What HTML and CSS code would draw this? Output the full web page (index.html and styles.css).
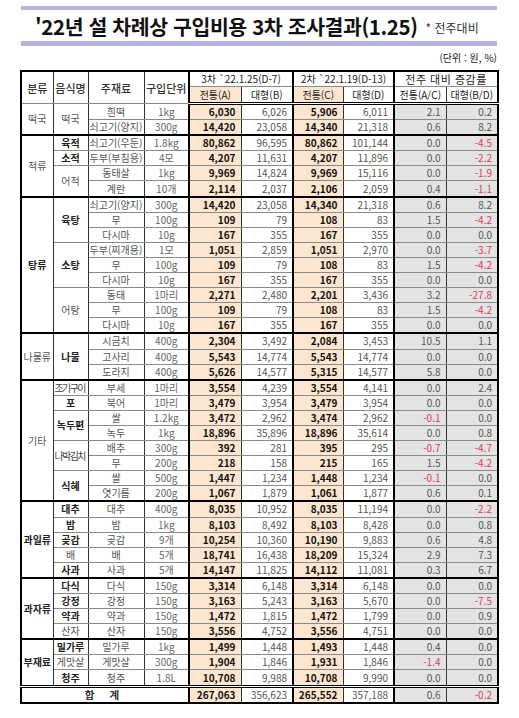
FILE: index.html
```html
<!DOCTYPE html>
<html lang="ko">
<head>
<meta charset="utf-8">
<title>'22년 설 차례상 구입비용 3차 조사결과</title>
<link rel="stylesheet" href="styles.css">
</head>
<body>
<div class="title">
  <span class="main">'22년 설 차례상 구입비용 3차 조사결과(1.25)</span>
  <span class="sub">* 전주대비</span>
</div>
<div class="unit">(단위 : 원, %)</div>
<table class="tbl">
  <colgroup>
    <col class="c1"><col class="c2"><col class="c3"><col class="c4">
    <col class="c5"><col class="c6"><col class="c7"><col class="c8"><col class="c9"><col class="c10">
  </colgroup>
  <thead>
    <tr class="h1">
      <th rowspan="2">분류</th>
      <th rowspan="2">음식명</th>
      <th rowspan="2">주재료</th>
      <th rowspan="2">구입단위</th>
      <th colspan="2" class="tl">3차 `22.1.25(D-7)</th>
      <th colspan="2" class="tl">2차 `22.1.19(D-13)</th>
      <th colspan="2" class="tl">전주 대비 증감률</th>
    </tr>
    <tr class="h2">
      <th class="p tl">전통(A)</th>
      <th>대형(B)</th>
      <th class="p tl">전통(C)</th>
      <th>대형(D)</th>
      <th class="tl">전통(A/C)</th>
      <th>대형(B/D)</th>
    </tr>
  </thead>
  <tbody>
    <tr class="first">
      <td rowspan="2" class="cat">떡국</td><td rowspan="2" class="dish">떡국</td>
      <td class="ing">흰떡</td><td class="u">1kg</td>
      <td class="p n tl">6,030</td><td class="m">6,026</td><td class="p n tl">5,906</td><td class="m">6,011</td><td class="g tl">2.1</td><td class="g">0.2</td>
    </tr>
    <tr>
      <td class="ing clip">쇠고기(양지)</td><td class="u">300g</td>
      <td class="p n tl">14,420</td><td class="m">23,058</td><td class="p n tl">14,340</td><td class="m">21,318</td><td class="g tl">0.6</td><td class="g">8.2</td>
    </tr>

    <tr class="grp">
      <td rowspan="4" class="cat">적류</td><td class="dish dk">육적</td>
      <td class="ing clip">쇠고기(우둔)</td><td class="u">1.8kg</td>
      <td class="p n tl">80,862</td><td class="m">96,595</td><td class="p n tl">80,862</td><td class="m">101,144</td><td class="g tl">0.0</td><td class="g neg">-4.5</td>
    </tr>
    <tr>
      <td class="dish dk">소적</td>
      <td class="ing clip">두부(부침용)</td><td class="u">4모</td>
      <td class="p n tl">4,207</td><td class="m">11,631</td><td class="p n tl">4,207</td><td class="m">11,896</td><td class="g tl">0.0</td><td class="g neg">-2.2</td>
    </tr>
    <tr>
      <td rowspan="2" class="dish">어적</td>
      <td class="ing">동태살</td><td class="u">1kg</td>
      <td class="p n tl">9,969</td><td class="m">14,824</td><td class="p n tl">9,969</td><td class="m">15,116</td><td class="g tl">0.0</td><td class="g neg">-1.9</td>
    </tr>
    <tr>
      <td class="ing">계란</td><td class="u">10개</td>
      <td class="p n tl">2,114</td><td class="m">2,037</td><td class="p n tl">2,106</td><td class="m">2,059</td><td class="g tl">0.4</td><td class="g neg">-1.1</td>
    </tr>

    <tr class="grp">
      <td rowspan="9" class="cat dk">탕류</td><td rowspan="3" class="dish dk">육탕</td>
      <td class="ing clip">쇠고기(양지)</td><td class="u">300g</td>
      <td class="p n tl">14,420</td><td class="m">23,058</td><td class="p n tl">14,340</td><td class="m">21,318</td><td class="g tl">0.6</td><td class="g">8.2</td>
    </tr>
    <tr>
      <td class="ing">무</td><td class="u">100g</td>
      <td class="p n tl">109</td><td class="m">79</td><td class="p n tl">108</td><td class="m">83</td><td class="g tl">1.5</td><td class="g neg">-4.2</td>
    </tr>
    <tr>
      <td class="ing">다시마</td><td class="u">10g</td>
      <td class="p n tl">167</td><td class="m">355</td><td class="p n tl">167</td><td class="m">355</td><td class="g tl">0.0</td><td class="g">0.0</td>
    </tr>
    <tr>
      <td rowspan="3" class="dish dk">소탕</td>
      <td class="ing clip">두부(찌개용)</td><td class="u">1모</td>
      <td class="p n tl">1,051</td><td class="m">2,859</td><td class="p n tl">1,051</td><td class="m">2,970</td><td class="g tl">0.0</td><td class="g neg">-3.7</td>
    </tr>
    <tr>
      <td class="ing">무</td><td class="u">100g</td>
      <td class="p n tl">109</td><td class="m">79</td><td class="p n tl">108</td><td class="m">83</td><td class="g tl">1.5</td><td class="g neg">-4.2</td>
    </tr>
    <tr>
      <td class="ing">다시마</td><td class="u">10g</td>
      <td class="p n tl">167</td><td class="m">355</td><td class="p n tl">167</td><td class="m">355</td><td class="g tl">0.0</td><td class="g">0.0</td>
    </tr>
    <tr>
      <td rowspan="3" class="dish">어탕</td>
      <td class="ing">동태</td><td class="u">1마리</td>
      <td class="p n tl">2,271</td><td class="m">2,480</td><td class="p n tl">2,201</td><td class="m">3,436</td><td class="g tl">3.2</td><td class="g neg">-27.8</td>
    </tr>
    <tr>
      <td class="ing">무</td><td class="u">100g</td>
      <td class="p n tl">109</td><td class="m">79</td><td class="p n tl">108</td><td class="m">83</td><td class="g tl">1.5</td><td class="g neg">-4.2</td>
    </tr>
    <tr>
      <td class="ing">다시마</td><td class="u">10g</td>
      <td class="p n tl">167</td><td class="m">355</td><td class="p n tl">167</td><td class="m">355</td><td class="g tl">0.0</td><td class="g">0.0</td>
    </tr>

    <tr class="grp">
      <td rowspan="3" class="cat">나물류</td><td rowspan="3" class="dish dk">나물</td>
      <td class="ing">시금치</td><td class="u">400g</td>
      <td class="p n tl">2,304</td><td class="m">3,492</td><td class="p n tl">2,084</td><td class="m">3,453</td><td class="g tl">10.5</td><td class="g">1.1</td>
    </tr>
    <tr>
      <td class="ing">고사리</td><td class="u">400g</td>
      <td class="p n tl">5,543</td><td class="m">14,774</td><td class="p n tl">5,543</td><td class="m">14,774</td><td class="g tl">0.0</td><td class="g">0.0</td>
    </tr>
    <tr>
      <td class="ing">도라지</td><td class="u">400g</td>
      <td class="p n tl">5,626</td><td class="m">14,577</td><td class="p n tl">5,315</td><td class="m">14,577</td><td class="g tl">5.8</td><td class="g">0.0</td>
    </tr>

    <tr class="grp">
      <td rowspan="8" class="cat">기타</td><td class="dish sq">조기구이</td>
      <td class="ing">부세</td><td class="u">1마리</td>
      <td class="p n tl">3,554</td><td class="m">4,239</td><td class="p n tl">3,554</td><td class="m">4,141</td><td class="g tl">0.0</td><td class="g">2.4</td>
    </tr>
    <tr>
      <td class="dish dk">포</td>
      <td class="ing">북어</td><td class="u">1마리</td>
      <td class="p n tl">3,479</td><td class="m">3,954</td><td class="p n tl">3,479</td><td class="m">3,954</td><td class="g tl">0.0</td><td class="g">0.0</td>
    </tr>
    <tr>
      <td rowspan="2" class="dish dk">녹두편</td>
      <td class="ing">쌀</td><td class="u">1.2kg</td>
      <td class="p n tl">3,472</td><td class="m">2,962</td><td class="p n tl">3,474</td><td class="m">2,962</td><td class="g tl neg">-0.1</td><td class="g">0.0</td>
    </tr>
    <tr>
      <td class="ing">녹두</td><td class="u">1kg</td>
      <td class="p n tl">18,896</td><td class="m">35,896</td><td class="p n tl">18,896</td><td class="m">35,614</td><td class="g tl">0.0</td><td class="g">0.8</td>
    </tr>
    <tr>
      <td rowspan="2" class="dish sq">나박김치</td>
      <td class="ing">배추</td><td class="u">300g</td>
      <td class="p n tl">392</td><td class="m">281</td><td class="p n tl">395</td><td class="m">295</td><td class="g tl neg">-0.7</td><td class="g neg">-4.7</td>
    </tr>
    <tr>
      <td class="ing">무</td><td class="u">200g</td>
      <td class="p n tl">218</td><td class="m">158</td><td class="p n tl">215</td><td class="m">165</td><td class="g tl">1.5</td><td class="g neg">-4.2</td>
    </tr>
    <tr>
      <td rowspan="2" class="dish dk">식혜</td>
      <td class="ing">쌀</td><td class="u">500g</td>
      <td class="p n tl">1,447</td><td class="m">1,234</td><td class="p n tl">1,448</td><td class="m">1,234</td><td class="g tl neg">-0.1</td><td class="g">0.0</td>
    </tr>
    <tr>
      <td class="ing">엿기름</td><td class="u">200g</td>
      <td class="p n tl">1,067</td><td class="m">1,879</td><td class="p n tl">1,061</td><td class="m">1,877</td><td class="g tl">0.6</td><td class="g">0.1</td>
    </tr>

    <tr class="grp">
      <td rowspan="5" class="cat dk">과일류</td><td class="dish dk">대추</td>
      <td class="ing">대추</td><td class="u">400g</td>
      <td class="p n tl">8,035</td><td class="m">10,952</td><td class="p n tl">8,035</td><td class="m">11,194</td><td class="g tl">0.0</td><td class="g neg">-2.2</td>
    </tr>
    <tr>
      <td class="dish dk">밤</td>
      <td class="ing">밤</td><td class="u">1kg</td>
      <td class="p n tl">8,103</td><td class="m">8,492</td><td class="p n tl">8,103</td><td class="m">8,428</td><td class="g tl">0.0</td><td class="g">0.8</td>
    </tr>
    <tr>
      <td class="dish dk">곶감</td>
      <td class="ing">곶감</td><td class="u">9개</td>
      <td class="p n tl">10,254</td><td class="m">10,360</td><td class="p n tl">10,190</td><td class="m">9,883</td><td class="g tl">0.6</td><td class="g">4.8</td>
    </tr>
    <tr>
      <td class="dish">배</td>
      <td class="ing">배</td><td class="u">5개</td>
      <td class="p n tl">18,741</td><td class="m">16,438</td><td class="p n tl">18,209</td><td class="m">15,324</td><td class="g tl">2.9</td><td class="g">7.3</td>
    </tr>
    <tr>
      <td class="dish dk">사과</td>
      <td class="ing">사과</td><td class="u">5개</td>
      <td class="p n tl">14,147</td><td class="m">11,825</td><td class="p n tl">14,112</td><td class="m">11,081</td><td class="g tl">0.3</td><td class="g">6.7</td>
    </tr>

    <tr class="grp">
      <td rowspan="4" class="cat dk">과자류</td><td class="dish dk">다식</td>
      <td class="ing">다식</td><td class="u">150g</td>
      <td class="p n tl">3,314</td><td class="m">6,148</td><td class="p n tl">3,314</td><td class="m">6,148</td><td class="g tl">0.0</td><td class="g">0.0</td>
    </tr>
    <tr>
      <td class="dish dk">강정</td>
      <td class="ing">강정</td><td class="u">150g</td>
      <td class="p n tl">3,163</td><td class="m">5,243</td><td class="p n tl">3,163</td><td class="m">5,670</td><td class="g tl">0.0</td><td class="g neg">-7.5</td>
    </tr>
    <tr>
      <td class="dish dk">약과</td>
      <td class="ing">약과</td><td class="u">150g</td>
      <td class="p n tl">1,472</td><td class="m">1,815</td><td class="p n tl">1,472</td><td class="m">1,799</td><td class="g tl">0.0</td><td class="g">0.9</td>
    </tr>
    <tr>
      <td class="dish">산자</td>
      <td class="ing">산자</td><td class="u">150g</td>
      <td class="p n tl">3,556</td><td class="m">4,752</td><td class="p n tl">3,556</td><td class="m">4,751</td><td class="g tl">0.0</td><td class="g">0.0</td>
    </tr>

    <tr class="grp">
      <td rowspan="3" class="cat dk">부재료</td><td class="dish dk">밀가루</td>
      <td class="ing">밀가루</td><td class="u">1kg</td>
      <td class="p n tl">1,499</td><td class="m">1,448</td><td class="p n tl">1,493</td><td class="m">1,448</td><td class="g tl">0.4</td><td class="g">0.0</td>
    </tr>
    <tr>
      <td class="dish">게맛살</td>
      <td class="ing">게맛살</td><td class="u">300g</td>
      <td class="p n tl">1,904</td><td class="m">1,846</td><td class="p n tl">1,931</td><td class="m">1,846</td><td class="g tl neg">-1.4</td><td class="g">0.0</td>
    </tr>
    <tr>
      <td class="dish dk">청주</td>
      <td class="ing">청주</td><td class="u">1.8L</td>
      <td class="p n tl">10,708</td><td class="m">9,988</td><td class="p n tl">10,708</td><td class="m">9,990</td><td class="g tl">0.0</td><td class="g">0.0</td>
    </tr>

    <tr class="total">
      <td colspan="4" class="sum">합 계</td>
      <td class="p n tl">267,063</td><td class="m">356,623</td><td class="p n tl">265,552</td><td class="m">357,188</td><td class="g tl">0.6</td><td class="g neg">-0.2</td>
    </tr>
  </tbody>
</table>
</body>
</html>
```

FILE: styles.css
```css
html, body {
  margin: 0;
  padding: 0;
  background: #ffffff;
}

body {
  font-family: "Noto Sans CJK KR", "Noto Sans", sans-serif;
  color: #222;
}

.title {
  margin: 6px 0 0 21px;
  width: 476px;
  height: 40px;
  border-top: 4px solid #b6b4de;
  border-bottom: 5px solid #b6b4de;
  display: flex;
  align-items: center;
  padding-left: 14px;
  box-sizing: border-box;
}

.title .main {
  font-size: 20.5px;
  font-weight: 700;
  color: #111;
  letter-spacing: -0.4px;
  white-space: nowrap;
}

.title .sub {
  font-size: 12px;
  color: #333;
  margin-left: 8px;
  margin-top: 4px;
  white-space: nowrap;
}

.unit {
  width: 497px;
  text-align: right;
  font-size: 10px;
  color: #222;
  height: 24px;
  line-height: 24px;
}

.tbl {
  margin-left: 20px;
  border-collapse: collapse;
  table-layout: fixed;
  width: 477px;
  border: 2px solid #000;
  font-size: 10px;
}

.c1 { width: 32px; }
.c2 { width: 35px; }
.c3 { width: 56px; }
.c4 { width: 45px; }
.c5 { width: 52px; }
.c6 { width: 52px; }
.c7 { width: 50px; }
.c8 { width: 51px; }
.c9 { width: 52px; }
.c10 { width: 52px; }

.tbl th, .tbl td {
  border-left: 1px solid #333;
  border-right: 1px solid #333;
  border-top: 1px solid #8a8a8a;
  border-bottom: 1px solid #8a8a8a;
  padding: 0;
  white-space: nowrap;
  overflow: hidden;
  line-height: 12px;
}

.tbl th {
  font-weight: 400;
  color: #222;
  text-align: center;
}

.h1 th { height: 14px; font-size: 10px; }
.h1 th[rowspan] { font-size: 11px; color: #333; font-weight: 500; }
.h1 th:last-child { font-size: 11px; letter-spacing: 0.5px; }
.h2 th {
  height: 15px;
  font-size: 10px;
  border-bottom: 3px double #000;
}

.tl { border-left: 2px solid #000 !important; }

.tbl td { height: 14.1px; }

.p { background: #fde6cf; }
.g { background: #e3e3e3; }

.cat {
  text-align: center;
  color: #555;
  font-size: 10px;
}
.dish {
  text-align: center;
  color: #555;
}
.dk {
  color: #222;
  font-weight: 700;
}
.sq {
  letter-spacing: -1.6px;
  text-align: left;
  padding-left: 1px !important;
  color: #444;
}
.ing {
  text-align: center;
  color: #555;
}
.clip {
  text-align: left;
  padding-left: 1px !important;
  text-overflow: clip;
}
.u {
  text-align: center;
  color: #666;
}
.n {
  text-align: right;
  font-weight: 700;
  color: #111;
  padding-right: 5px !important;
}
.m {
  text-align: right;
  color: #555;
  padding-right: 5px !important;
}
.g {
  text-align: right;
  color: #555;
  padding-right: 5px !important;
}
.neg { color: #e23a55 !important; }

.grp td { border-top: 2px solid #000; }

.total td {
  border-top: 3px double #000;
  height: 14px;
}
.sum {
  text-align: center;
  font-weight: 700;
  color: #333;
  letter-spacing: 6px;
  font-size: 10.5px;
}
```
